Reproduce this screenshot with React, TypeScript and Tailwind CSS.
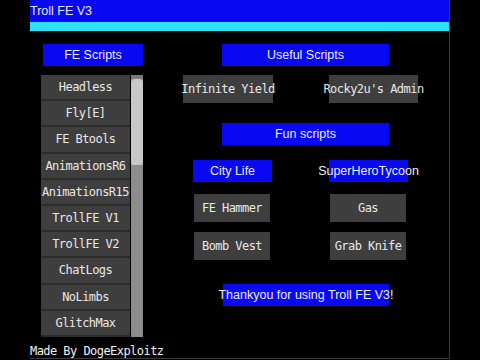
const feScripts = [
  "Headless",
  "Fly[E]",
  "FE Btools",
  "AnimationsR6",
  "AnimationsR15",
  "TrollFE V1",
  "TrollFE V2",
  "ChatLogs",
  "NoLimbs",
  "GlitchMax",
];

const sans = "font-['Liberation_Sans',Arial,sans-serif]";
const mono = "font-['DejaVu_Sans_Mono',monospace] text-[12px] tracking-[-0.55px]";

function Header({ label, className = "" }: { label: string; className?: string }) {
  return (
    <div
      className={`h-[22px] bg-[#0808f2] flex items-center justify-center text-[12.5px] text-[#ececff] whitespace-nowrap ${sans} ${className}`}
    >
      {label}
    </div>
  );
}

function GrayButton({ label, className = "" }: { label: string; className?: string }) {
  return (
    <button
      className={`h-[28px] bg-[#3e3e3e] flex items-center justify-center text-[#e8e8e8] whitespace-nowrap overflow-visible ${mono} ${className}`}
    >
      {label}
    </button>
  );
}

export default function App() {
  return (
    <div className="w-[480px] h-[360px] bg-black overflow-hidden">
      <div className="ml-[30px] w-[420px] h-[359px] border-r border-b border-[#3a3a3a] flex flex-col">
        {/* Title bar */}
        <div className={`h-[22px] bg-[#0808f2] flex items-center text-[12.5px] text-[#e6e6ff] ${sans}`}>
          Troll FE V3
        </div>
        <div className="h-[9px] bg-[#2ce2f6]"></div>

        <div className="flex flex-1">
          {/* FE scripts column */}
          <div className="pl-[11px] pt-[13px] w-[142px] flex flex-col">
            <Header label="FE Scripts" className="ml-[2px] w-[100px]" />
            <div className="mt-[9px] w-[102px] h-[262px] flex">
              <div className="w-[89px] flex flex-col bg-[#2a2a2a]">
                {feScripts.map((s) => (
                  <div
                    key={s}
                    className={`h-[26.2px] bg-[#3e3e3e] border-b-2 border-[#2b2b2b] flex items-center justify-center text-[#e8e8e8] whitespace-nowrap ${mono}`}
                  >
                    {s}
                  </div>
                ))}
              </div>
              <div className="ml-[1px] w-[12px] bg-[#8c8c8c] flex flex-col">
                <div className="h-[4px] bg-[#7a7a7a]"></div>
                <div className="h-[86px] bg-[#c8c8c8] rounded-t-[4px] rounded-b-[2px]"></div>
              </div>
            </div>
            <div className={`mt-auto mb-[1px] -ml-[11px] text-[#f2f2f2] leading-none whitespace-nowrap ${mono}`}>
              Made By DogeExploitz
            </div>
          </div>

          {/* Right side */}
          <div className="ml-[11px] pt-[13px] w-[235px] flex flex-col">
            <Header label="Useful Scripts" className="ml-[39px] w-[167px]" />
            <div className="mt-[9px] flex justify-between">
              <GrayButton label="Infinite Yield" className="w-[90px]" />
              <GrayButton label="Rocky2u's Admin" className="w-[89px]" />
            </div>
            <Header label="Fun scripts" className="mt-[20px] ml-[39px] w-[167px] h-[20px]" />
            <div className="mt-[15px] flex">
              <Header label="City Life" className="ml-[10px] w-[79px]" />
              <Header label="SuperHeroTycoon" className="ml-[57px] w-[79px]" />
            </div>
            <div className="mt-[12px] flex">
              <GrayButton label="FE Hammer" className="ml-[11px] w-[76px]" />
              <GrayButton label="Gas" className="ml-[60px] w-[76px]" />
            </div>
            <div className="mt-[10px] flex">
              <GrayButton label="Bomb Vest" className="ml-[11px] w-[76px]" />
              <GrayButton label="Grab Knife" className="ml-[60px] w-[76px]" />
            </div>
            <Header label="Thankyou for using Troll FE V3!" className="mt-[24px] ml-[40px] w-[166px]" />
          </div>
        </div>
      </div>
    </div>
  );
}
